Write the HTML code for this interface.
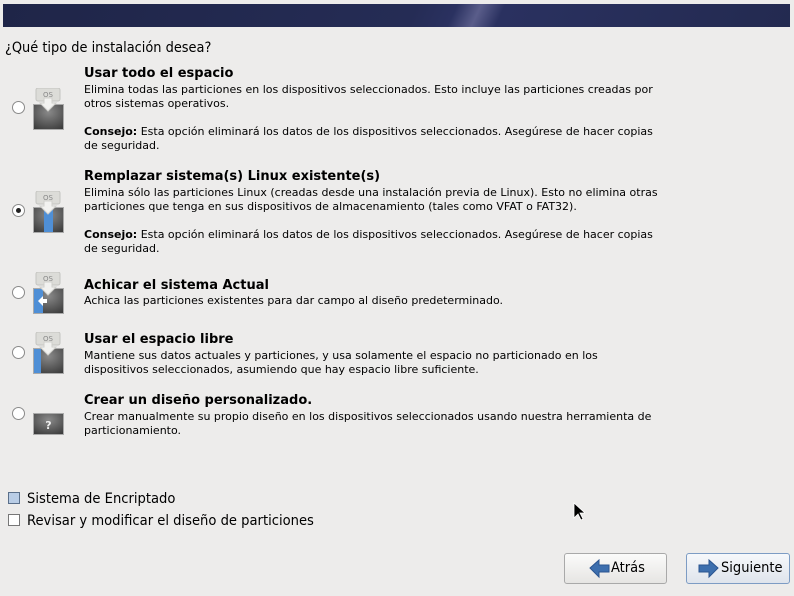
<!DOCTYPE html>
<html><head><meta charset="utf-8"><style>
body{margin:0;width:794px;height:596px;background:#edeceb;font-family:"DejaVu Sans","Liberation Sans",sans-serif;color:#000;position:relative;overflow:hidden}
.ban{position:absolute;left:3px;top:4px;width:787px;height:23px;background:linear-gradient(115deg,#1f2548 0%,#252c55 52%,#2a3160 57%,#5a5d8a 60%,#2a3160 63%,#232a50 100%)}
.a{position:absolute;white-space:nowrap}
.q{left:5px;top:40px;font-size:14.4px;font-family:"DejaVu Sans Condensed","DejaVu Sans",sans-serif}
.t{left:84px;font-size:13px;font-weight:bold}
.d{left:84px;font-size:11px;line-height:14px}
.r{position:absolute;left:12px;width:13px;height:13px;border:1px solid #8a8a8a;border-radius:50%;background:#fff;box-sizing:border-box}
.r.on::after{content:"";position:absolute;left:3px;top:3px;width:5px;height:5px;border-radius:50%;background:#222}
.ic{position:absolute;left:32px}
.cb{position:absolute;left:8px;width:12px;height:12px;border:1px solid #777;box-sizing:border-box;background:#fff}
.btn{position:absolute;top:553px;height:31px;border:1px solid #a9a9a9;border-radius:3px;background:linear-gradient(#fbfbfa,#e6e5e3);box-sizing:border-box;font-size:14.5px;font-family:"DejaVu Sans Condensed","DejaVu Sans",sans-serif}
.lb{left:27px;font-size:14.6px;font-family:"DejaVu Sans Condensed","DejaVu Sans",sans-serif}
</style></head><body>
<div class="ban"></div>
<div class="a q">¿Qué tipo de instalación desea?</div>

<svg width="0" height="0" style="position:absolute"><defs>
<radialGradient id="g" cx="0.5" cy="0.3" r="0.8"><stop offset="0" stop-color="#8a8a8a"/><stop offset="1" stop-color="#3b3b3b"/></radialGradient>
<g id="os"><rect x="4" y="0" width="24" height="13" rx="2" fill="#dcdcd8" stroke="#c4c4c0"/><text x="16" y="9" font-size="7" text-anchor="middle" fill="#888" font-family="DejaVu Sans">OS</text><path d="M12 10h8v5h4l-8 8-8-8h4z" fill="#f2f2f0" stroke="#d0d0cc"/></g>
</defs></svg>

<div class="r" style="top:101px;left:12px"></div>
<svg class="ic" style="top:88px" width="34" height="44"><rect x="1.5" y="16.5" width="30" height="25" fill="url(#g)" stroke="#aaa"/><use href="#os"/></svg>
<div class="a t" style="top:66px">Usar todo el espacio</div>
<div class="a d" style="top:83px">Elimina todas las particiones en los dispositivos seleccionados. Esto incluye las particiones creadas por<br>otros sistemas operativos.<br><br><b>Consejo:</b> Esta opción eliminará los datos de los dispositivos seleccionados. Asegúrese de hacer copias<br>de seguridad.</div>

<div class="r on" style="top:204px"></div>
<svg class="ic" style="top:191px" width="34" height="44"><rect x="1.5" y="16.5" width="30" height="25" fill="url(#g)" stroke="#aaa"/><rect x="12" y="17" width="9" height="24" fill="#4f8fd6"/><use href="#os"/></svg>
<div class="a t" style="top:169px">Remplazar sistema(s) Linux existente(s)</div>
<div class="a d" style="top:186px">Elimina sólo las particiones Linux (creadas desde una instalación previa de Linux). Esto no elimina otras<br>particiones que tenga en sus dispositivos de almacenamiento (tales como VFAT o FAT32).<br><br><b>Consejo:</b> Esta opción eliminará los datos de los dispositivos seleccionados. Asegúrese de hacer copias<br>de seguridad.</div>

<div class="r" style="top:286px"></div>
<svg class="ic" style="top:272px" width="34" height="44"><rect x="1.5" y="16.5" width="30" height="25" fill="url(#g)" stroke="#aaa"/><rect x="2" y="17" width="9" height="24" fill="#4f8fd6"/><path d="M6 29l5-5v3h4v4h-4v3z" fill="#fff"/><use href="#os"/></svg>
<div class="a t" style="top:278px">Achicar el sistema Actual</div>
<div class="a d" style="top:294px">Achica las particiones existentes para dar campo al diseño predeterminado.</div>

<div class="r" style="top:346px"></div>
<svg class="ic" style="top:332px" width="34" height="44"><rect x="1.5" y="16.5" width="30" height="25" fill="url(#g)" stroke="#aaa"/><rect x="2" y="17" width="7" height="24" fill="#4f8fd6"/><use href="#os"/></svg>
<div class="a t" style="top:332px">Usar el espacio libre</div>
<div class="a d" style="top:349px">Mantiene sus datos actuales y particiones, y usa solamente el espacio no particionado en los<br>dispositivos seleccionados, asumiendo que hay espacio libre suficiente.</div>

<div class="r" style="top:407px"></div>
<svg class="ic" style="top:412px" width="34" height="24"><rect x="1.5" y="1.5" width="30" height="21" fill="url(#g)" stroke="#aaa"/><text x="16.5" y="17" font-size="11" font-weight="bold" text-anchor="middle" fill="#eee" font-family="DejaVu Sans">?</text></svg>
<div class="a t" style="top:393px">Crear un diseño personalizado.</div>
<div class="a d" style="top:410px">Crear manualmente su propio diseño en los dispositivos seleccionados usando nuestra herramienta de<br>particionamiento.</div>

<div class="cb" style="top:492px;background:#b9cde6;border-color:#5a6f8a"></div>
<div class="a lb" style="top:490px">Sistema de Encriptado</div>
<div class="cb" style="top:514px"></div>
<div class="a lb" style="top:512px">Revisar y modificar el diseño de particiones</div>

<svg style="position:absolute;left:573px;top:502px" width="12" height="20"><path d="M1 1v15l4-4 3 6 2-1-3-6h5z" fill="#000" stroke="#fff" stroke-width="0.8"/></svg>

<div class="btn" style="left:564px;width:103px">
<svg style="position:absolute;left:24px;top:5px" width="22" height="20"><path d="M1 9l9-8v5h10v7H10v5z" fill="#3d6fae" stroke="#2a5490"/></svg>
<span style="position:absolute;left:46px;top:6px">Atrás</span></div>
<div class="btn" style="left:686px;width:104px;border-color:#7d9cc4;background:linear-gradient(#f6f8fb,#dfe4ec)">
<svg style="position:absolute;left:10px;top:5px" width="22" height="20"><path d="M21 9l-9-8v5H2v7h10v5z" fill="#3d6fae" stroke="#2a5490"/></svg>
<span style="position:absolute;left:34px;top:6px">Siguiente</span></div>
</body></html>
